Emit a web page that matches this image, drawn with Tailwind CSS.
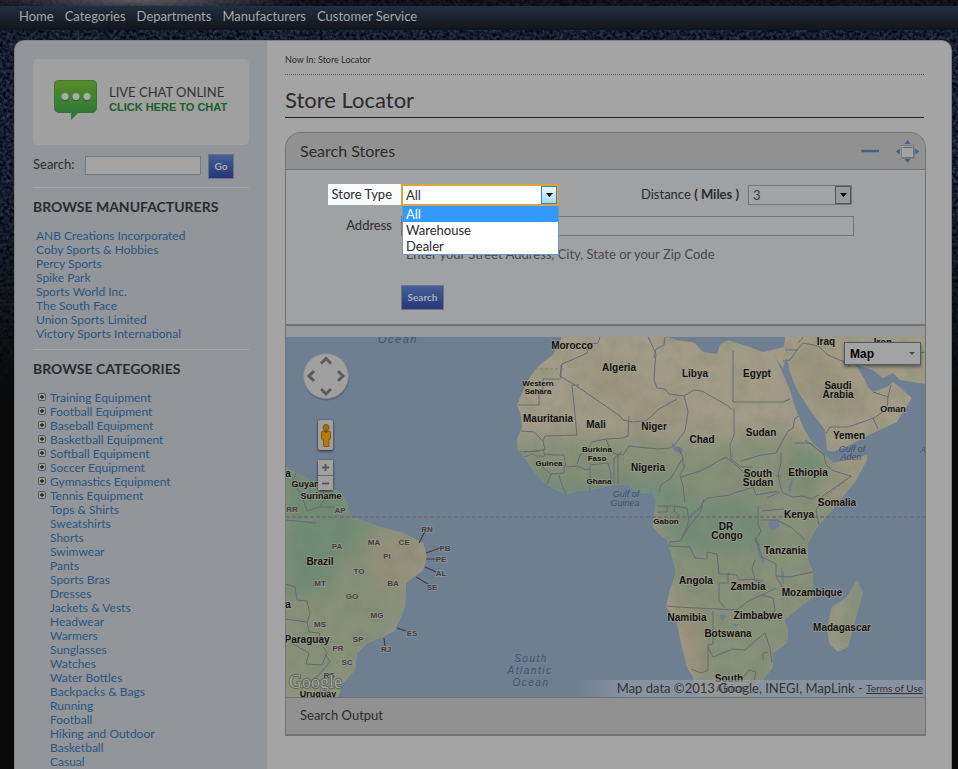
<!DOCTYPE html>
<html lang="en">
<head>
<meta charset="utf-8">
<meta name="viewport" content="width=device-width, initial-scale=1">
<title>Store Locator</title>
<script src="https://cdn.jsdelivr.net/npm/@tailwindcss/browser@4"></script>
</head>
<body class="relative isolate flex h-screen flex-col overflow-hidden bg-[#090909] font-[Lato,sans-serif] text-[13px] text-[#2b2b2b]">

<!-- Stone backdrop -->
<svg class="absolute inset-x-0 top-0 -z-10 h-[400px] w-full" preserveAspectRatio="none" viewBox="0 0 958 400" aria-hidden="true">
  <defs>
    <filter id="stone" x="0" y="0" width="100%" height="100%" color-interpolation-filters="sRGB">
      <feTurbulence type="fractalNoise" baseFrequency="0.3" numOctaves="4" seed="7"/>
      <feColorMatrix values="0.35 0 0 0 -0.09  0.35 0 0 0 -0.06  0.38 0 0 0 -0.01  0 0 0 0 1"/>
    </filter>
    <linearGradient id="fade" x1="0" y1="0" x2="0" y2="1">
      <stop offset="0.45" stop-color="#090909" stop-opacity="0"/>
      <stop offset="1" stop-color="#090909"/>
    </linearGradient>
    <radialGradient id="glow"><stop offset="0" stop-color="#8a8d92" stop-opacity=".6"/><stop offset="1" stop-color="#8a8d92" stop-opacity="0"/></radialGradient>
  </defs>
  <rect width="958" height="400" filter="url(#stone)"/>
  <rect width="958" height="7" fill="#0c0c0e" opacity=".6"/>
  <ellipse cx="140" cy="0" rx="160" ry="14" fill="url(#glow)"/>
  <rect width="958" height="400" fill="url(#fade)"/>
</svg>

<nav class="mt-1.5 flex h-6 shrink-0 items-center gap-[11px] bg-linear-to-b from-[#20303f] to-[#12141c] pb-0.5 pl-[19px] text-[#a6a8aa]" aria-label="Main">
  <a href="#">Home</a><a href="#">Categories</a><a href="#">Departments</a><a href="#">Manufacturers</a><a href="#">Customer Service</a>
</nav>

<div class="mt-2.5 mr-1.5 ml-3.5 flex min-h-0 flex-1 overflow-hidden rounded-t-[10px] border-x border-t border-[#7e8080] bg-[#a4a4a4]">

  <aside class="w-[252px] shrink-0 bg-[#929599] px-[18px] pt-[18px]">
    <a href="#" class="flex h-[86px] w-full items-start gap-3 rounded-[5px] bg-[#a0a0a0] pt-5 pl-[21px]">
      <svg class="h-[42px] w-[43px] shrink-0" viewBox="0 0 43 42" aria-hidden="true">
        <defs><linearGradient id="bubble" x1="0" y1="0" x2="0" y2="1"><stop offset="0" stop-color="#588a2b"/><stop offset="1" stop-color="#28753a"/></linearGradient></defs>
        <path d="M5 1h33q5 0 5 5v22q0 6-6 6H24l-7 7v-7H6q-6 0-6-6V6q0-5 5-5z" fill="url(#bubble)"/>
        <path d="M5 1.500h33q4.500 0 4.500 4.500v22q0 5.500-5.500 5.500H6q-5.500 0-5.500-5.500V6q0-4.500 4.500-4.500z" fill="none" stroke="#32702a" stroke-opacity=".6"/>
        <g fill="#1e5c2c" opacity=".6"><circle cx="11" cy="19" r="3.500"/><circle cx="22" cy="19" r="3.500"/><circle cx="33" cy="19" r="3.500"/></g>
        <g fill="#a8aca6"><circle cx="11" cy="17.500" r="3.500"/><circle cx="22" cy="17.500" r="3.500"/><circle cx="33" cy="17.500" r="3.500"/></g>
      </svg>
      <span class="flex flex-col pt-[5px] whitespace-nowrap">
        <span class="leading-4 text-[#333]">LIVE CHAT ONLINE</span>
        <span class="font-['Liberation_Sans',sans-serif] text-[11px] leading-[14px] font-bold text-[#176129]">CLICK HERE TO CHAT</span>
      </span>
    </a>

    <form class="mt-2 flex h-[26px] items-center pb-0.5">
      <label for="q" class="w-[52px]">Search:</label>
      <input id="q" type="text" class="h-[19px] w-[116px] border border-[#76797d] bg-[#a4a4a4] px-1">
      <button type="button" class="mt-0.5 ml-[7px] h-[25px] w-[26px] border border-[#6b7486] bg-linear-to-b from-[#455f98] to-[#263876] text-[10px] font-bold text-[#a9b0bf]">Go</button>
    </form>

    <section class="mt-2 border-t border-[#a4a6a9] pt-[9px]">
      <h2 class="text-sm leading-5 font-bold">BROWSE MANUFACTURERS</h2>
      <ul class="mt-3 pl-[3px] text-xs leading-[14px] text-[#2a5680]">
        <li class="leading-[14px]"><a href="#">ANB Creations Incorporated</a></li>
        <li><a href="#">Coby Sports &amp; Hobbies</a></li>
        <li><a href="#">Percy Sports</a></li>
        <li><a href="#">Spike Park</a></li>
        <li><a href="#">Sports World Inc.</a></li>
        <li><a href="#">The South Face</a></li>
        <li><a href="#">Union Sports Limited</a></li>
        <li><a href="#">Victory Sports International</a></li>
      </ul>
    </section>

    <section class="mt-2 border-t border-[#a4a6a9] pt-[9px]">
      <h2 class="text-sm leading-5 font-bold">BROWSE CATEGORIES</h2>
      <svg class="hidden" aria-hidden="true"><symbol id="plus" viewBox="0 0 8 8"><rect x=".5" y=".5" width="7" height="7" rx="1" fill="#a09c90" stroke="#485a6a"/><path d="M2 4h4M4 2v4" stroke="#222" stroke-width="1.300"/></symbol></svg>
      <ul class="mt-3 pl-[5px] text-xs leading-[14px] text-[#2a5680]">
        <li class="flex gap-1"><svg class="mt-0.5 size-2" aria-hidden="true"><use href="#plus"/></svg><a href="#">Training Equipment</a></li>
        <li class="flex gap-1"><svg class="mt-0.5 size-2" aria-hidden="true"><use href="#plus"/></svg><a href="#">Football Equipment</a></li>
        <li class="flex gap-1"><svg class="mt-0.5 size-2" aria-hidden="true"><use href="#plus"/></svg><a href="#">Baseball Equipment</a></li>
        <li class="flex gap-1"><svg class="mt-0.5 size-2" aria-hidden="true"><use href="#plus"/></svg><a href="#">Basketball Equipment</a></li>
        <li class="flex gap-1"><svg class="mt-0.5 size-2" aria-hidden="true"><use href="#plus"/></svg><a href="#">Softball Equipment</a></li>
        <li class="flex gap-1"><svg class="mt-0.5 size-2" aria-hidden="true"><use href="#plus"/></svg><a href="#">Soccer Equipment</a></li>
        <li class="flex gap-1"><svg class="mt-0.5 size-2" aria-hidden="true"><use href="#plus"/></svg><a href="#">Gymnastics Equipment</a></li>
        <li class="flex gap-1"><svg class="mt-0.5 size-2" aria-hidden="true"><use href="#plus"/></svg><a href="#">Tennis Equipment</a></li>
        <li class="pl-3"><a href="#">Tops &amp; Shirts</a></li>
        <li class="pl-3"><a href="#">Sweatshirts</a></li>
        <li class="pl-3"><a href="#">Shorts</a></li>
        <li class="pl-3"><a href="#">Swimwear</a></li>
        <li class="pl-3"><a href="#">Pants</a></li>
        <li class="pl-3"><a href="#">Sports Bras</a></li>
        <li class="pl-3"><a href="#">Dresses</a></li>
        <li class="pl-3"><a href="#">Jackets &amp; Vests</a></li>
        <li class="pl-3"><a href="#">Headwear</a></li>
        <li class="pl-3"><a href="#">Warmers</a></li>
        <li class="pl-3"><a href="#">Sunglasses</a></li>
        <li class="pl-3"><a href="#">Watches</a></li>
        <li class="pl-3"><a href="#">Water Bottles</a></li>
        <li class="pl-3"><a href="#">Backpacks &amp; Bags</a></li>
        <li class="pl-3"><a href="#">Running</a></li>
        <li class="pl-3"><a href="#">Football</a></li>
        <li class="pl-3"><a href="#">Hiking and Outdoor</a></li>
        <li class="pl-3"><a href="#">Basketball</a></li>
        <li class="pl-3"><a href="#">Casual</a></li>
      </ul>
    </section>
  </aside>

  <main class="min-w-0 flex-1 pt-[11px] pr-[25px] pl-[18px]">
    <p class="mr-0.5 border-b border-dotted border-[#555] pb-1.5 text-[9px] leading-4">Now In: Store Locator</p>
    <h1 class="mr-0.5 border-b border-[#222] pt-[11px] pb-[3px] text-[22px] leading-7">Store Locator</h1>

    <section class="mt-3.5 rounded-t-2xl border-x border-t border-b-2 border-[#717373] bg-[#999]">
      <header class="flex h-[37px] items-center rounded-t-2xl border-b border-[#717373] bg-[#919191] pr-[5px] pl-3.5">
        <h2 class="flex-1 text-base">Search Stores</h2>
        <button type="button" class="mr-4" aria-label="Minimize"><svg class="h-3 w-[18px]" viewBox="0 0 18 12" aria-hidden="true"><path d="M.5 6H18" stroke="#41608c" stroke-width="2.600"/></svg></button>
        <button type="button" aria-label="Maximize"><svg class="size-[25px]" viewBox="0 0 25 25" aria-hidden="true">
          <g fill="#416190"><path d="M12.500 1l3 4h-6zM12.500 24l3-4h-6zM.8 12.500l4-3v6zM24.200 12.500l-4-3v6z"/></g>
          <rect x="6.500" y="6.500" width="12" height="12" fill="#a3a3a3" stroke="#7c7c7c"/><path d="M7 19h12V8" fill="none" stroke="#666"/><path d="M8 8.500h9.500" stroke="#4c6b98"/>
        </svg></button>
      </header>

      <form class="h-[156px] border-b-2 border-[#717373] bg-[#9fa1a2] pt-3.5">
        <div class="flex items-center">
          <label for="type" class="ml-[42px] h-[21px] w-[73px] self-start bg-[#fafbfc] pr-[9px] text-right leading-[21px] whitespace-nowrap">Store Type</label>
          <div class="relative">
            <select id="type" class="block h-[22px] w-[158px] appearance-none border-2 border-[#d9a441] bg-white pl-[3px] leading-[18px] outline-none">
              <option>All</option><option>Warehouse</option><option>Dealer</option>
            </select>
            <span class="pointer-events-none absolute top-0.5 right-0.5 flex h-[18px] w-4 items-center justify-center border border-[#3c7fb1] bg-linear-to-b from-[#eaf6fd] to-[#a7d9f5]"><svg class="h-1 w-[7px]" viewBox="0 0 7 4" aria-hidden="true"><path d="M0 0h7L3.500 4z"/></svg></span>
            <ul role="listbox" aria-label="Store Type" class="absolute top-[22px] left-px z-10 w-[157px] border-x border-b border-[#7397c0] bg-white leading-4">
              <li role="option" aria-selected="true" class="bg-[#3399ff] pl-[3px] text-white">All</li>
              <li role="option" aria-selected="false" class="pl-[3px]">Warehouse</li>
              <li role="option" aria-selected="false" class="pl-[3px]">Dealer</li>
            </ul>
          </div>
          <label for="dist" class="mr-[9px] ml-auto">Distance <span class="font-bold">( Miles )</span></label>
          <div class="relative mr-[73px]">
            <select id="dist" class="block h-5 w-[104px] appearance-none border border-[#737577] bg-[#a4a4a4] pl-1 leading-[18px] text-[#3a3a3a]">
              <option>3</option>
            </select>
            <span class="pointer-events-none absolute top-px right-px flex h-[18px] w-4 items-center justify-center border border-[#555] bg-[#9a9a9a]"><svg class="h-1 w-[7px]" viewBox="0 0 7 4" aria-hidden="true"><path d="M0 0h7L3.500 4z"/></svg></span>
          </div>
        </div>
        <div class="mt-2.5 flex items-center">
          <label for="addr" class="w-[115px] pr-[9px] text-right">Address</label>
          <input id="addr" type="text" class="mr-[71px] h-5 flex-1 border border-[#737577] bg-[#a4a4a4] px-1">
        </div>
        <p class="mt-2 ml-[120px] leading-5 text-[#484a4b]">Enter your Street Address, City, State or your Zip Code</p>
        <button type="button" class="mt-[21px] ml-[115px] block h-[25px] w-[43px] border border-[#6b7486] bg-linear-to-b from-[#455f98] to-[#263876] text-[10px] font-bold text-[#a9b0bf]">Search</button>
      </form>

      <div class="relative mt-[11px] h-[360px] overflow-hidden bg-[#707f92] font-['Liberation_Sans',Arial,sans-serif]">
        <svg class="block h-full w-full" viewBox="286 337 639 360" preserveAspectRatio="xMidYMid slice" role="img" aria-label="Map of Africa and the South Atlantic">
          <defs>
            <clipPath id="land">
              <path d="M562 337l-5 10-4 8-11 8-7 7-7 10-6 13-5 12 4 10 1 12-5 13 1 10 7 8 8 12 10 12 10 6 13 6 12-3 12-1 23-5 14-1 6 5 5 4 14-1 4 8-1 10-2 10v7l6 7 8 6 6 20 3 13-6 17-4 17 5 6 6 10 4 20 6 24 6 10 5 20h47l15-14 13-16v-14l14-10 1-13-4-10 16-13 13-10v-25l-5-12v-17l9-16 15-17 8-10 15-18 12-22v-5l-14 4-20 4-10-10-11-11-9-15-8-20-5-17-10-23-8-17-9 2-13-5-10-3-12-4-8 5-3 9-14-2-8-9-18-3-10-3z"/>
              <path d="M785 337l-1 10-12 3 5 10 6 8 3-10 2 5 2 10 7 17 13 20 15 20 2 20 5 2 18-7 23-12 24-11 6-10 9-14-9-8-10-8-6 5-14 5-5-5-3-7-8-13-4-4 10 4 10 3 10 8 10-5 7 7 25 4v-47z"/>
              <path d="M286 467l11 6 13 7 30 12 7 11 3 14 10 3 20 7 23 6 20 10 4 14-4 13-17 13-1 24-10 23-12 7-16 6-10 10-2 17-12 13-5 14h-52z"/>
              <path d="M857 580l6 13-5 17-10 37-10 5-9-9-2-16 5-20 15-10z"/>
            </clipPath>
            <filter id="soft" x="-30%" y="-30%" width="160%" height="160%"><feGaussianBlur stdDeviation="9"/></filter>
            <filter id="relief" x="0" y="0" width="100%" height="100%" color-interpolation-filters="sRGB"><feTurbulence type="fractalNoise" baseFrequency=".06" numOctaves="4" seed="3"/><feColorMatrix values="0 0 0 0 .45  0 0 0 0 .5  0 0 0 0 .42  1.8 0 0 0 -.78"/></filter>
          </defs>
          <rect x="286" y="337" width="639" height="360" fill="#6f7f92"/>
          <g clip-path="url(#land)">
            <rect x="286" y="337" width="639" height="360" fill="#a29b87"/>
            <g filter="url(#soft)">
              <path fill="#879079" d="M500 440l90-5 110 8 90-12 20 20 50 30 20 60-50 70-20 110H700l-30-130-20-80-160-10z"/>
              <path fill="#758c77" d="M510 460l60 20 60-5 40 5 20 20 60-5 30 50-50 10-60-5-10-40-90-5-60-10z"/>
              <path fill="#879079" d="M280 460h80l70 70-20 90-70 80h-60z"/>
              <path fill="#718b75" d="M280 450l60 40 30 40-30 30-10 30-50 10z"/>
              <path fill="#998f7c" d="M375 540l40-5 10 20-20 30-20 10-10-30z"/>
              <path fill="#9b907a" d="M670 600l25 5 10 50-10 30-20-60z"/>
              <path fill="#738b75" d="M790 460l20-20 20 20-10 15-25 15z"/>
              <path fill="#9c957f" d="M840 455l30 3-25 40-25 8z"/>
              <path fill="#6f8a74" d="M855 575l12 15-18 65-8-10z"/>
            </g>
            <path fill="#8f866f" opacity=".35" filter="url(#soft)" d="M790 350l30 0 30 30 20 30-30 5-30-10zM590 360l30 5 20 30-40 10zM640 400l50 5 0 20-60 0z"/>
            <rect x="286" y="337" width="639" height="360" filter="url(#relief)" opacity=".3"/>
            <path fill="#6f7f92" d="M672 443l4 3 7 3-1 4-6-1-4-5zM769 521l9-2 2 7-8 5-4-5zM757 538l5 18 3 6-2 1-6-12zM781 566l3 8 0 12-3-8zM795 470l-5 24-2-5zM721 614l5 2-3 5-3-3zM733 624l6 0-3 3z"/>
            <g fill="none" stroke="#686a72" stroke-width="1" stroke-linejoin="round">
              <path d="M600 337l-2 6-8 1-3 9-13 6-12 5-2 12 18 11 42 29 3 4 10 2 13-1 13-12 18-10"/>
              <path d="M560 379h-17v10l-4 1v15h-21M561 365v14M579 385h-7l5 50-32 1-2 5-9-9-13-1M543 441l2 9-21 2M519 452l20-1M522 458l10-4 5 2h8l-2-7M545 454l8 1 11 0 2 12 12-1 8 4 4-1M564 465l0 8-13 1-10-8M551 474l-4 10M559 475l4 13 3 6M577 464l3-9 7-4 5-9 14-3 17-1 5-2 1-20M606 439l5 13 6 2 7 1M590 465v25M590 465l18-2 3 11v10M614 484v-26l8-6M618 484v-30"/>
              <path d="M648 337l4 8 4 9-1 10-1 16 3 8 8 1 4 5 15 2 10-6 8 1 26 15 4 4M665 337l-1 8-8 4-2 9M623 455l6-9 9 1 20 2 12-1 6-5M676 443l9-12 3-19-4-17M678 447l5 11-12 20-10 7-2 7M683 458l0 7 2 0-5 10 3 11 2 17M681 477l19-6 10-5 10-6 7-3M733 350v52M734 408v27l-4 10 1 14 10 8 12 0"/>
              <path d="M657 506h18l12 2 2 12-3 10-4 8M657 512h10v-6M675 506l-1 5 5 4-3 6M688 518l12-10 3-6 5-4 22-3 4-2 20-6M704 499l-4 14-10 12-10 16-10 1-2 5M733 402h50l7-3M727 458l11 9 10 10 5 10 3 8 12-2 10-2M741 461l20-6 15-2 12-22 5-3M793 428l2-10 8-4M781 453l0 10-3 12 3 13 2 5M776 476l5 0M783 493l10 4 10-1 8 3 8-4M795 443l15 0 14 12 2 10 8 6 17 5M805 440l20 15M851 476l-28 20-3 5-4 10 3 14M767 498l13-6M762 511l22-2M758 506l0 18 3 7-6 10 5 4M761 520l16 0 15 8 13 12M755 537l7 20 14 7 0 12 8 14M755 560l-3 8 3 12 8 1"/>
              <path d="M669 546l21 1 5 11 12 1v-7l10 2 2 20 10 0v-2M719 583h9v-9l8 1 4 5 12-1 9 4M719 583v18l6 7M667 606l10 1 60 3 10-8 14-7 12 3 2 12-5 10-20-2-12-6M713 611v33l-5 1v25l-7 3-10-4M708 647l5 10 10-4 10-4 12 1 10-9 10-8M765 633l5 15 2 15M763 660v-7l5-1M743 678l6-8 7 2-2 8-8 3M776 576l13 1 24-5M762 595l14-7"/>
              <path d="M785 350l12 0 6-7 15 3 10 9 14 6 8 5M797 350l-7 10-7 1M798 343l5-6M842 361l15 0M873 392l15 5 3-12M888 397l-1 12-13 9-26 9-18 0-4 6M873 418l5 11M900 345l10 10 15-3"/>
              <path d="M286 584l9 3 2 13 10 1 3 13-3 8-22-3M307 622l2 10 10 1 3 12 5 8-5 12-16-1 3-11-18-10M325 654l5 8-12 14-14 9-4 8M296 473l-3 8 9 15 5 15 12-4 15 0M310 480l0 22M321 485l4 14-5 6M286 520l30 3"/>
            </g>
            <path d="M535 369h28M826 496l26-20" stroke="#78805f" stroke-dasharray="3 2"/>
          </g>
          <path d="M286 517h639" stroke="#75687b" stroke-width="1.500" stroke-dasharray="4 2"/>
          <path d="M419 543l6-12M426 553l14-5M426 559h11M425 567l11 5M416 577l12 7M397 628l9 3M384 638l1 8" stroke="#3e3e46" stroke-width="1.200"/>
          <g fill="#111" stroke="#a6a290" stroke-opacity=".55" stroke-width="2" paint-order="stroke" font-size="10" font-weight="700" text-anchor="middle">
            <text x="572" y="349">Morocco</text><text x="619" y="371">Algeria</text><text x="695" y="377">Libya</text><text x="757" y="377">Egypt</text><text x="826" y="345">Iraq</text><text x="883" y="346">Iran</text>
            <text x="838" y="389">Saudi</text><text x="838" y="398">Arabia</text><text x="893" y="412" font-size="9">Oman</text><text x="849" y="439">Yemen</text>
            <text x="538" y="386" font-size="8">Western</text><text x="538" y="394" font-size="8">Sahara</text><text x="548" y="422">Mauritania</text><text x="596" y="428">Mali</text><text x="654" y="430">Niger</text><text x="702" y="443">Chad</text><text x="761" y="436">Sudan</text>
            <text x="597" y="452" font-size="8">Burkina</text><text x="597" y="461" font-size="8">Faso</text><text x="549" y="466" font-size="8">Guinea</text><text x="599" y="484" font-size="8">Ghana</text><text x="648" y="471">Nigeria</text>
            <text x="758" y="477">South</text><text x="758" y="486">Sudan</text><text x="808" y="476">Ethiopia</text><text x="837" y="506">Somalia</text><text x="799" y="518">Kenya</text><text x="666" y="524" font-size="8">Gabon</text><text x="726" y="530">DR</text><text x="727" y="539">Congo</text>
            <text x="785" y="554">Tanzania</text><text x="696" y="584">Angola</text><text x="748" y="590">Zambia</text><text x="812" y="596">Mozambique</text><text x="687" y="621">Namibia</text><text x="758" y="619">Zimbabwe</text><text x="728" y="637">Botswana</text><text x="842" y="631">Madagascar</text><text x="729" y="682">South</text><text x="730" y="692">Africa</text>
            <text x="320" y="565">Brazil</text><text x="307" y="643">Paraguay</text><text x="308" y="487" font-size="9">Guyana</text><text x="321" y="499" font-size="9">Suriname</text><text x="318" y="697" font-size="9">Uruguay</text><text x="288" y="477">a</text><text x="288" y="608">a</text>
          </g>
          <g fill="#453f42" stroke="#a3a199" stroke-opacity=".45" stroke-width="2" paint-order="stroke" font-size="8" text-anchor="middle" font-weight="700">
            <text x="292" y="512">RR</text><text x="340" y="513">AP</text><text x="337" y="549">PA</text><text x="374" y="545">MA</text><text x="404" y="545">CE</text><text x="387" y="559">PI</text><text x="359" y="574">TO</text><text x="393" y="586">BA</text><text x="320" y="586">MT</text><text x="352" y="599">GO</text><text x="377" y="618">MG</text><text x="320" y="627">MS</text><text x="358" y="642">SP</text><text x="338" y="651">PR</text><text x="347" y="665">SC</text><text x="329" y="678">RS</text>
            <text x="427" y="532">RN</text><text x="445" y="551">PB</text><text x="441" y="562">PE</text><text x="441" y="576">AL</text><text x="432" y="590">SE</text><text x="412" y="636">ES</text><text x="386" y="652">RJ</text>
          </g>
          <g fill="#40536c" font-size="10" font-style="italic" text-anchor="middle">
            <text x="626" y="497" font-size="9">Gulf of</text><text x="625" y="506" font-size="9">Guinea</text><text x="852" y="452" font-size="9">Gulf of</text><text x="851" y="460" font-size="9">Aden</text><text x="923" y="453" font-size="9">A</text>
            <g letter-spacing="1.500"><text x="398" y="343" font-size="11">Ocean</text><text x="531" y="662">South</text><text x="530" y="674">Atlantic</text><text x="531" y="686">Ocean</text></g>
          </g>
          <text x="289" y="688" font-family="Liberation Serif, serif" font-size="18" fill="#a3a69f" stroke="#596257" stroke-width="1.500" paint-order="stroke">Google</text>
        </svg>

        <!-- Map controls -->
        <svg class="absolute top-3.5 left-4 size-[50px]" viewBox="0 0 50 50" aria-hidden="true">
          <circle cx="24.500" cy="26.500" r="23" fill="#3f4b5a" opacity=".45"/><circle cx="24" cy="25" r="22.500" fill="#a0a0a0" stroke="#84888d"/>
          <path d="M19 12.500l5-5 5 5M19 38l5 5 5-5M12 20l-5 5 5 5M36 20l5 5-5 5" fill="none" stroke="#5c5c5c" stroke-width="3"/>
        </svg>
        <button type="button" aria-label="Street View" class="absolute top-[83px] left-8 flex h-[30px] w-[15px] items-center justify-center rounded-xs bg-[#a0a0a0] shadow-[0_1px_3px_#222]">
          <svg class="h-[23px] w-[10px]" viewBox="0 0 10 23" aria-hidden="true"><path d="M2 7h6q1.500 0 1.500 2v6H8v7.500H2.500V15H.5V9q0-2 1.500-2z" fill="#b17d0a" stroke="#885510"/><circle cx="5" cy="3.500" r="3" fill="#a36e0c" stroke="#885510"/><path d="M2.500 7L5 9.500 7.500 7" fill="#9a3b16"/></svg>
        </button>
        <div class="absolute top-[123px] left-8 flex w-[15px] flex-col gap-px rounded-xs bg-[#666] shadow-[0_1px_3px_#222]">
          <button type="button" aria-label="Zoom in" class="flex h-[15px] items-center justify-center bg-[#a0a0a0]"><svg class="size-[9px]" viewBox="0 0 9 9" aria-hidden="true"><path d="M1 4.500h7M4.500 1v7" stroke="#555" stroke-width="1.800"/></svg></button>
          <button type="button" aria-label="Zoom out" class="flex h-[14px] items-center justify-center bg-[#a0a0a0]"><svg class="size-[9px]" viewBox="0 0 9 9" aria-hidden="true"><path d="M1 4.500h7" stroke="#555" stroke-width="1.800"/></svg></button>
        </div>
        <button type="button" class="absolute top-[5px] right-1 flex h-[23px] w-[77px] items-center justify-between border border-[#4f5a68] bg-[#a3a3a3] px-[5px] text-xs font-bold text-black shadow-[0_2px_3px_#0006]">Map<svg class="h-[3px] w-1.5" viewBox="0 0 6 3" aria-hidden="true"><path d="M0 0h6L3 3z" fill="#444"/></svg></button>
        <p class="absolute right-0 bottom-0 flex h-[17px] items-center bg-linear-to-r from-[#9a9fac]/0 via-[#9a9fac]/60 via-15% to-[#9a9fac]/60 pr-0.5 pl-[42px] font-[Lato,sans-serif] whitespace-nowrap text-[#333]">Map data ©2013 Google, INEGI, MapLink -&nbsp;<a href="#" class="text-[10px] underline">Terms of Use</a></p>
      </div>

      <h2 class="flex h-[37px] items-center border-t border-[#717373] bg-[#919191] pl-3.5">Search Output</h2>
    </section>
  </main>
</div>
</body>
</html>
